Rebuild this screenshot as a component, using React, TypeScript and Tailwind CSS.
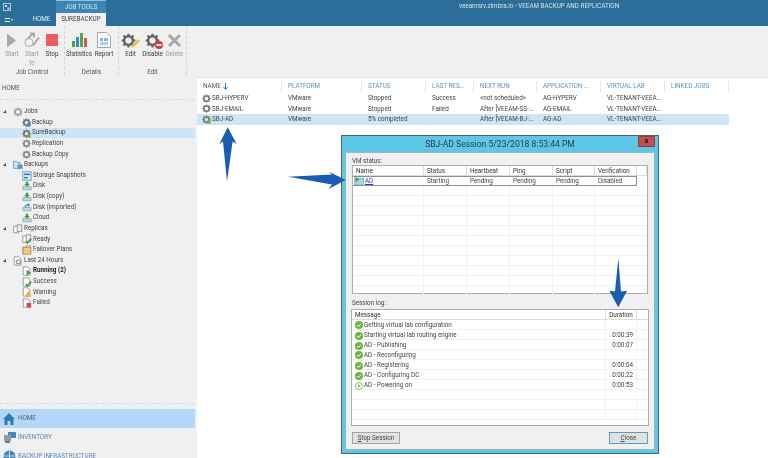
import React from "react";

const Gear = ({ c = "#6f6f6f", size = 9, dot }: { c?: string; size?: number; dot?: string }) => (
  <svg width={size} height={size} viewBox="0 0 24 24" className="shrink-0">
    <circle cx="12" cy="12" r="7" fill="none" stroke={c} strokeWidth="4" />
    <path d="M12 1v5M12 18v5M1 12h5M18 12h5M4 4l4 4M16 16l4 4M20 4l-4 4M8 16l-4 4" stroke={c} strokeWidth="3.4" />
    {dot && <rect x="14" y="14" width="9" height="9" fill={dot} />}
  </svg>
);

const Doc = ({ badge }: { badge: string }) => (
  <svg width="10" height="10" viewBox="0 0 24 24" className="shrink-0">
    <path d="M3 2h11l5 5v15H3z" fill="#fff" stroke="#8a8a8a" strokeWidth="2" />
    {badge === "run" && <path d="M11 9l11 7-11 7z" fill="#3aa53a" />}
    {badge === "ok" && <path d="M9 17l4 4 9-10" fill="none" stroke="#3aa53a" strokeWidth="4" />}
    {badge === "warn" && <path d="M15 9l8 14H7z" fill="#efb22b" />}
    {badge === "fail" && <rect x="11" y="12" width="11" height="11" fill="#d9434e" />}
    {badge === "gear" && <circle cx="13" cy="14" r="5" fill="none" stroke="#999" strokeWidth="3" />}
  </svg>
);

const Disk = ({ up, c = "#3aa53a" }: { up?: boolean; c?: string }) => (
  <svg width="10" height="10" viewBox="0 0 24 24" className="shrink-0">
    <rect x="2" y="13" width="20" height="8" rx="1" fill="#bcd6e8" stroke="#7d98aa" strokeWidth="1.6" />
    <path d={up ? "M6 13c0-5 3-8 8-8V2l6 5-6 5V9c-3 0-5 1-5 4z" : "M9 2h6v5h4l-7 7-7-7h4z"} fill={c} />
  </svg>
);

const Snap = () => (
  <svg width="10" height="10" viewBox="0 0 24 24" className="shrink-0">
    <rect x="2" y="2" width="20" height="20" fill="#e8f2fa" stroke="#5f8fb5" strokeWidth="2" />
    <rect x="5" y="6" width="14" height="4" fill="#2b7fc0" />
    <rect x="5" y="14" width="9" height="4" fill="#2b7fc0" />
  </svg>
);

const Folder = () => (
  <svg width="10" height="10" viewBox="0 0 24 24" className="shrink-0">
    <path d="M1 3h8l2 3h6v14H1z" fill="#cfe2f1" stroke="#6c93b3" strokeWidth="2" />
    <rect x="11" y="11" width="12" height="10" fill="#4d94c9" />
  </svg>
);

const Pages = ({ b }: { b?: string }) => (
  <svg width="10" height="10" viewBox="0 0 24 24" className="shrink-0">
    <rect x="2" y="5" width="11" height="16" fill="#fff" stroke="#8a8a8a" strokeWidth="2" />
    <rect x="10" y="2" width="11" height="16" fill="#eee" stroke="#8a8a8a" strokeWidth="2" />
    {b === "ok" && <path d="M9 17l4 4 9-10" fill="none" stroke="#3aa53a" strokeWidth="4" />}
    {b === "plan" && <rect x="3" y="6" width="18" height="16" fill="#f1c98c" stroke="#c78d3c" strokeWidth="2" />}
  </svg>
);

type Row = { t: string; d: number; i: React.ReactNode; sel?: boolean; bold?: boolean };
const tree: Row[] = [
  { t: "Jobs", d: 0, i: <Gear c="#a5a5a5" size={10} /> },
  { t: "Backup", d: 1, i: <Gear dot="#3d89c8" /> },
  { t: "SureBackup", d: 1, i: <Gear c="#8a6a6a" dot="#6cb33f" />, sel: true },
  { t: "Replication", d: 1, i: <Gear c="#888" /> },
  { t: "Backup Copy", d: 1, i: <Gear c="#888" /> },
  { t: "Backups", d: 0, i: <Folder /> },
  { t: "Storage Snapshots", d: 1, i: <Snap /> },
  { t: "Disk", d: 1, i: <Disk /> },
  { t: "Disk (copy)", d: 1, i: <Disk /> },
  { t: "Disk (imported)", d: 1, i: <Disk up c="#4d94c9" /> },
  { t: "Cloud", d: 1, i: <Disk /> },
  { t: "Replicas", d: 0, i: <Pages /> },
  { t: "Ready", d: 1, i: <Pages b="ok" /> },
  { t: "Failover Plans", d: 1, i: <Pages b="plan" /> },
  { t: "Last 24 Hours", d: 0, i: <Doc badge="gear" /> },
  { t: "Running (2)", d: 1, i: <Doc badge="run" />, bold: true },
  { t: "Success", d: 1, i: <Doc badge="ok" /> },
  { t: "Warning", d: 1, i: <Doc badge="warn" /> },
  { t: "Failed", d: 1, i: <Doc badge="fail" /> },
];

const RibbonBtn = ({ icon, label, dim, w }: { icon: React.ReactNode; label: string; dim?: boolean; w: string }) => (
  <div className={`flex flex-col items-center ${w}`}>
    <div className="h-[16px] flex items-center justify-center">{icon}</div>
    <div className={`mt-[2px] text-center leading-[8.5px] ${dim ? "text-[#9a9a9a]" : "text-[#3d3d3d]"}`}>{label}</div>
  </div>
);

const RibbonGroup = ({ w, label, children }: { w: string; label: string; children: React.ReactNode }) => (
  <div className={`${w} h-full flex flex-col border-r border-dashed border-[#d4d4d4]`}>
    <div className="h-[41.5px] shrink-0 flex justify-center pt-[6px]">{children}</div>
    <div className="text-center text-[#555] leading-[8px]">{label}</div>
  </div>
);

const jobCols = "grid-cols-[85px_80px_64px_48px_63px_64px_64px_64px]";
const jobHead = ["NAME", "PLATFORM", "STATUS", "LAST RES...", "NEXT RUN", "APPLICATION ...", "VIRTUAL LAB", "LINKED JOBS"];
const jobs = [
  ["SBJ-HYPERV", "VMware", "Stopped", "Success", "<not scheduled>", "AG-HYPERV", "VL-TENANT-VEEA..."],
  ["SBJ-EMAIL", "VMware", "Stopped", "Failed", "After  [VEEAM-SS-...", "AG-EMAIL", "VL-TENANT-VEEA..."],
  ["SBJ-AD", "VMware", "5% completed", "", "After  [VEEAM-BJ-...", "AG-AD", "VL-TENANT-VEEA..."],
];

const vmCols = "grid-cols-[71px_43px_43px_43px_42px_42px_1fr]";
const vmHead = ["Name", "Status", "Heartbeat", "Ping", "Script", "Verification", ""];
const logCols = "grid-cols-[253px_32px_1fr]";
const log: [string, string, boolean?][] = [
  ["Getting virtual lab configuration", ""],
  ["Starting virtual lab routing engine", "0:00:39"],
  ["AD - Publishing", "0:00:07"],
  ["AD - Reconfiguring", ""],
  ["AD - Registering", "0:00:04"],
  ["AD - Configuring DC", "0:00:22"],
  ["AD - Powering on", "0:00:53", true],
];

const ok = (
  <svg width="8" height="8" viewBox="0 0 16 16" className="shrink-0">
    <circle cx="8" cy="8" r="8" fill="#6cb33f" />
    <path d="M4 8l3 3 5-6" fill="none" stroke="#fff" strokeWidth="2" />
  </svg>
);
const play = (
  <svg width="8" height="8" viewBox="0 0 16 16" className="shrink-0">
    <circle cx="8" cy="8" r="7" fill="#fff" stroke="#6cb33f" strokeWidth="1.6" />
    <path d="M6 4.5l5 3.5-5 3.5z" fill="#6cb33f" />
  </svg>
);

export default function App() {
  return (
    <div className="w-[768px] h-[458px] overflow-hidden relative bg-white flex flex-col text-[6.3px] text-[#444] blur-[0.25px]" style={{ fontFamily: 'Roboto, "Noto Sans", sans-serif' }}>
      {/* title bar */}
      <div className="h-[26px] bg-[#2c6e99] relative shrink-0 flex items-end text-[#e4edf3]">
        <svg width="8" height="8" viewBox="0 0 8 8" className="absolute left-[3px] top-[3px]">
          <rect x="0.5" y="0.5" width="7" height="7" fill="none" stroke="#c9dbe6" strokeWidth="0.8" />
          <rect x="2" y="2" width="2" height="2" fill="#c9dbe6" />
          <rect x="4.5" y="4.5" width="2" height="2" fill="#c9dbe6" />
        </svg>
        <div className="absolute left-[56px] top-0 w-[50px] h-[13px] bg-[#3c86b6] border-t border-[#8cc0e0] text-center leading-[12px] text-[#cfe3f0]">JOB TOOLS</div>
        <div className="w-[27px] h-[13px] pl-[5px] flex items-center gap-[1px]">
          <span className="w-[5px] h-[4px] border-y border-white" />
          <span className="text-[4px]">▾</span>
        </div>
        <div className="w-[29px] h-[13px] text-center leading-[13px]">HOME</div>
        <div className="w-[50px] h-[13px] bg-[#f0f0f0] text-[#444] text-center leading-[13px]">SUREBACKUP</div>
        <div className="absolute left-[459px] top-[2px] leading-[9px] text-[#d7e4ec] whitespace-nowrap">veeamsrv.zimbra.io - VEEAM BACKUP AND REPLICATION</div>
      </div>

      {/* ribbon */}
      <div className="h-[51px] bg-[#f0f0f0] shrink-0 flex pb-[2px]">
        <RibbonGroup w="w-[65px]" label="Job Control">
          <RibbonBtn w="w-[20px]" dim label="Start" icon={<svg width="10" height="15" viewBox="0 0 10 14"><path d="M0 0l9 7-9 7z" fill="#a8a8a8" /></svg>} />
          <RibbonBtn w="w-[20px]" dim label="Start to" icon={
            <svg width="17" height="16" viewBox="0 0 17 15">
              <path d="M2 8l7-7M6 1h4v4M9 13l6-8" fill="none" stroke="#a9a9a9" strokeWidth="2" />
              <circle cx="5" cy="10" r="4" fill="#f0f0f0" stroke="#a9a9a9" />
            </svg>} />
          <RibbonBtn w="w-[20px]" label="Stop" icon={<span className="block w-[12px] h-[12px] bg-[#ee5a5f]" />} />
        </RibbonGroup>
        <RibbonGroup w="w-[54px]" label="Details">
          <RibbonBtn w="w-[25px]" label="Statistics" icon={
            <svg width="16" height="16" viewBox="0 0 16 16">
              <rect x="1" y="9" width="3" height="6" fill="#45a845" />
              <rect x="5" y="5" width="3" height="10" fill="#3d89c8" />
              <rect x="9" y="1" width="3" height="14" fill="#53a953" />
              <rect x="13" y="6" width="3" height="9" fill="#d9534f" />
            </svg>} />
          <RibbonBtn w="w-[25px]" label="Report" icon={
            <svg width="14" height="16" viewBox="0 0 14 16">
              <path d="M0.5 0.5h9l4 4v11h-13z" fill="#fff" stroke="#9aa" />
              <rect x="3" y="6" width="3" height="3" fill="#7fb6dc" />
              <rect x="7" y="6" width="4" height="3" fill="#7fb6dc" />
              <rect x="3" y="10" width="8" height="3" fill="#a9cfe8" />
            </svg>} />
        </RibbonGroup>
        <RibbonGroup w="w-[68px]" label="Edit">
          <RibbonBtn w="w-[22px]" label="Edit" icon={
            <div className="relative -translate-x-[2px]"><Gear c="#666" size={15} /><svg width="11" height="11" viewBox="0 0 11 11" className="absolute -right-[5px] -bottom-[1px]"><path d="M1 10l1-3 6-6 2 2-6 6z" fill="#eebc4e" /></svg></div>} />
          <RibbonBtn w="w-[22px]" label="Disable" icon={
            <div className="relative"><Gear c="#666" size={15} /><svg width="8" height="8" viewBox="0 0 9 9" className="absolute -right-[3px] -bottom-[1px]"><circle cx="4.5" cy="4.5" r="4.5" fill="#d93a3f" /><rect x="1.5" y="3.5" width="6" height="2" fill="#fff" /></svg></div>} />
          <RibbonBtn w="w-[22px]" dim label="Delete" icon={
            <svg width="15" height="15" viewBox="0 0 15 15"><path d="M2 2l11 11M13 2L2 13" stroke="#a8a8a8" strokeWidth="3" /></svg>} />
        </RibbonGroup>
      </div>

      {/* body */}
      <div className="flex-1 flex min-h-0">
        {/* left pane */}
        <div className="w-[197px] shrink-0 bg-[#f0f0f0] flex flex-col pr-[2px] overflow-hidden">
          <div className="h-[23px] shrink-0 pt-[7px] pl-[2px] leading-[9px] border-b border-dashed border-[#dcdcdc] text-[#555]">HOME</div>
          <div className="pt-[6.5px] h-[303px] shrink-0">
            {tree.map((r) => (
              <div key={r.t} className={`h-[10.63px] flex items-center ${r.d ? "pl-[22px]" : "pl-[3px]"} ${r.sel ? "bg-[#cde5f7]" : ""} ${r.bold ? "font-bold text-[#222]" : ""}`}>
                {!r.d && <svg width="3" height="3" viewBox="0 0 3 3" className="mr-[7px] shrink-0"><path d="M3 0v3H0z" fill="#444" /></svg>}
                {r.i}
                <span className="whitespace-nowrap ml-[1px]">{r.t}</span>
              </div>
            ))}
          </div>
          <div className="border-t border-dashed border-[#dcdcdc] pt-[5px] shrink-0">
            <div className="h-[19px] bg-[#b3d7f9] flex items-center gap-[3px] pl-[3px] text-[#3d5f7a]">
              <svg width="12" height="12" viewBox="0 0 12 12"><path d="M6 0L0 6h1.5v6h3V8h3v4h3V6H12z" fill="#2c7cb4" /></svg>
              HOME
            </div>
            <div className="h-[19px] flex items-center gap-[2px] pl-[3px] text-[#5b8ab4]">
              <svg width="13" height="13" viewBox="0 0 13 13"><rect x="5" y="1" width="8" height="6" fill="#4a86b8" /><rect x="1" y="4" width="7" height="6" fill="#8a9aa6" /><rect x="2" y="10" width="5" height="2" fill="#777" /></svg>
              INVENTORY
            </div>
            <div className="h-[19px] flex items-center gap-[2px] pl-[3px] text-[#5b8ab4] whitespace-nowrap">
              <svg width="13" height="13" viewBox="0 0 13 13"><circle cx="6.5" cy="6.5" r="6" fill="#3f86bc" /><path d="M1 6h11M6.5 1v11" stroke="#fff" strokeWidth="0.7" /></svg>
              BACKUP INFRASTRUCTURE
            </div>
          </div>
        </div>

        {/* job list */}
        <div className="flex-1 bg-white border-t border-[#e3e3e3]">
          <div className={`grid ${jobCols} w-[532px] h-[14px] mt-[1px] items-center text-[#5b93c2]`}>
            {jobHead.map((h, i) => (
              <div key={h} className={`h-[11px] leading-[11px] whitespace-nowrap pl-[6px] border-r border-[#dceaf5] ${i === 0 ? "flex items-center gap-[2px] text-[#555]" : ""}`}>
                {h}
                {i === 0 && <svg width="5" height="7" viewBox="0 0 5 7"><path d="M2.5 0v6M0.5 4l2 2.5 2-2.5" fill="none" stroke="#2c7cc4" strokeWidth="1" /></svg>}
              </div>
            ))}
          </div>
          <div className="w-[532px]">
            {jobs.map((r, ri) => (
              <div key={r[0]} className={`grid ${jobCols} h-[10.5px] items-center ${ri === 2 ? "bg-[#cde5f7]" : ""}`}>
                {r.map((c, i) => (
                  <div key={i} className={`whitespace-nowrap leading-[10px] ${i === 0 ? "pl-[5px] flex items-center gap-[1px]" : "pl-[6px]"}`}>
                    {i === 0 && <Gear c="#777" size={9} dot={ri === 2 ? "#6cb33f" : undefined} />}
                    {c}
                  </div>
                ))}
                <div />
              </div>
            ))}
          </div>
        </div>
      </div>

      {/* session window */}
      <div className="absolute left-[341px] top-[135px] w-[318px] h-[319px] bg-[#5ec6e6] border border-[#4d6470] flex flex-col px-[3px] pb-[3px]">
        <div className="h-[16px] relative shrink-0 flex items-center justify-center text-[8.6px] text-[#2c3e4a]">
          SBJ-AD Session 5/23/2018 8:53:44 PM
          <div className="absolute right-0 top-0 w-[17px] h-[11px] bg-[#c0504d] border border-[#8f3f3c] flex items-center justify-center text-[7px] font-bold leading-none text-[#111]">x</div>
        </div>
        <div className="flex-1 bg-[#f0f0f0] px-[6px] flex flex-col border border-[#9bb7c4]">
          <div className="h-[12px] pt-[2.5px] leading-[10px] text-[#444] shrink-0">VM status:</div>
          <div className="h-[129px] bg-white border border-[#adadad] shrink-0">
            <div className={`grid ${vmCols} h-[10px] border-b border-[#dcdcdc] text-[#333]`}>
              {vmHead.map((h, i) => (
                <div key={i} className="pl-[3px] leading-[10px] border-r border-[#dcdcdc]">{h}</div>
              ))}
            </div>
            <div className={`grid ${vmCols} h-[10px] text-[#444]`}>
              <div className="pl-[1px] flex items-center gap-[1px] border-y border-[#8e8e8e]">
                <svg width="10" height="8" viewBox="0 0 9 8" className="shrink-0"><rect y="1" width="9" height="7" fill="#a9d0ec" stroke="#6e9dbf" strokeWidth="0.6" /><path d="M1 0l4 2.5L1 5z" fill="#47a447" /></svg>
                <span className="text-[#2a35c8] underline leading-[8px]">AD</span>
              </div>
              {["Starting", "Pending", "Pending", "Pending", "Disabled"].map((c, i) => (
                <div key={i} className={`pl-[3px] leading-[8px] border-y border-[#8e8e8e] ${i === 4 ? "border-r" : ""}`}>{c}</div>
              ))}
              <div />
            </div>
            {Array.from({ length: 11 }).map((_, n) => (
              <div key={n} className={`grid ${vmCols} h-[10px] border-b border-[#f1f1f1]`}>
                {vmHead.map((_, i) => (
                  <div key={i} className={i < 5 ? "border-r border-[#f1f1f1]" : ""} />
                ))}
              </div>
            ))}
          </div>
          <div className="h-[14.5px] pt-[3.5px] leading-[10px] text-[#444] shrink-0">Session log:</div>
          <div className="h-[117.5px] bg-white border border-[#adadad] shrink-0 -mx-[1px]">
            <div className={`grid ${logCols} h-[10px] border-b border-[#dcdcdc] text-[#333]`}>
              <div className="pl-[3px] leading-[10px]">Message</div>
              <div className="border-x border-[#dcdcdc] text-center leading-[10px] whitespace-nowrap">Duration</div>
              <div />
            </div>
            {Array.from({ length: 10 }).map((_, n) => {
              const l = log[n];
              return (
                <div key={n} className={`grid ${logCols} h-[10px] border-b border-[#f1f1f1]`}>
                  <div className="pl-[3px] flex items-center gap-[1px] whitespace-nowrap pt-[1px]">
                    {l && (l[2] ? play : ok)}
                    {l && l[0]}
                  </div>
                  <div className="border-x border-[#f1f1f1] text-right pr-[3px] leading-[11px]">{l ? l[1] : ""}</div>
                  <div />
                </div>
              );
            })}
          </div>
          <div className="flex justify-between mt-[6px]">
            <button className="w-[48px] h-[12px] bg-[#e1e1e1] border border-[#a5a5a5] text-[#444] leading-none"><span className="underline">S</span>top Session</button>
            <button className="w-[39px] h-[12px] bg-[#e1e1e1] border border-[#5f9cc4] text-[#444] leading-none"><span className="underline">C</span>lose</button>
          </div>
        </div>
      </div>

      {/* annotation arrows */}
      <svg width="24" height="58" viewBox="0 0 24 58" className="absolute left-[216px] top-[126px]">
        <path d="M11.7 1.3L20.7 18L16.6 15.5L11 55.7L7 15.5L3.3 18Z" fill="#1a5cb0" />
      </svg>
      <svg width="60" height="26" viewBox="0 0 60 26" className="absolute left-[288px] top-[165px]">
        <path d="M57.7 15L40.5 24L44 19.5L0 11.7L44 9.5L41 6.7Z" fill="#1a5cb0" />
      </svg>
      <svg width="24" height="52" viewBox="0 0 24 52" className="absolute left-[606px] top-[257px]">
        <path d="M12.3 50.3L3.3 33.7L9 34.5L12.3 1.3L15 34.5L21 33.7Z" fill="#1a5cb0" />
      </svg>
    </div>
  );
}
